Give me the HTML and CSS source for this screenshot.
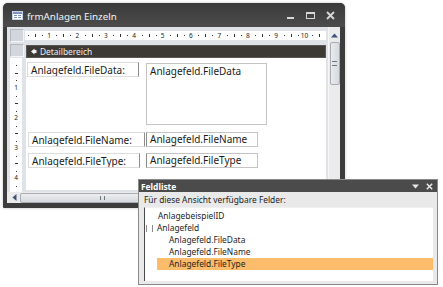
FILE: index.html
```html
<!DOCTYPE html>
<html>
<head>
<meta charset="utf-8">
<link rel="stylesheet" href="styles.css">
</head>
<body>
<div class="window">
  <div class="titlebar">
    <svg class="appicon" width="11" height="9" viewBox="0 0 11 9">
      <rect x="0.5" y="0.5" width="10" height="8" fill="#fff" stroke="#c9d3e6"/>
      <rect x="1" y="1" width="9" height="2" fill="#7e93c4"/>
      <rect x="2" y="4" width="3" height="1" fill="#7e93c4"/>
      <rect x="6" y="4" width="3" height="1" fill="#7e93c4"/>
      <rect x="2" y="6" width="3" height="1" fill="#7e93c4"/>
      <rect x="6" y="6" width="3" height="1" fill="#7e93c4"/>
    </svg>
    <span class="title">frmAnlagen Einzeln</span>
    <div class="controls">
      <svg width="9" height="9" viewBox="0 0 9 9"><rect x="1" y="6" width="7" height="2" fill="#d8d8d8"/></svg>
      <svg width="9" height="9" viewBox="0 0 9 9"><rect x="0.5" y="1.5" width="8" height="6" fill="none" stroke="#d8d8d8"/><rect x="1" y="2" width="7" height="1" fill="#d8d8d8"/></svg>
      <svg width="9" height="9" viewBox="0 0 9 9"><path d="M1 1 L8 8 M8 1 L1 8" stroke="#d8d8d8" stroke-width="1.8"/></svg>
    </div>
  </div>
  <div class="client">
    <div class="corner"><div class="cbox"></div></div>
    <div class="hruler">
      <div class="hstrip">
        <div class="hunit"><i class="d"></i><i class="t"></i><i class="d"></i><span>1</span></div>
        <div class="hunit"><i class="d"></i><i class="t"></i><i class="d"></i><span>2</span></div>
        <div class="hunit"><i class="d"></i><i class="t"></i><i class="d"></i><span>3</span></div>
        <div class="hunit"><i class="d"></i><i class="t"></i><i class="d"></i><span>4</span></div>
        <div class="hunit"><i class="d"></i><i class="t"></i><i class="d"></i><span>5</span></div>
        <div class="hunit"><i class="d"></i><i class="t"></i><i class="d"></i><span>6</span></div>
        <div class="hunit"><i class="d"></i><i class="t"></i><i class="d"></i><span>7</span></div>
        <div class="hunit"><i class="d"></i><i class="t"></i><i class="d"></i><span>8</span></div>
        <div class="hunit"><i class="d"></i><i class="t"></i><i class="d"></i><span>9</span></div>
        <div class="hunit"><i class="d"></i><i class="t"></i><i class="d"></i><span>10</span></div>
        <div class="hunit last"><i class="d"></i><i class="t"></i></div>
      </div>
    </div>
    <div class="vscroll">
      <div class="uparrow"><svg width="7" height="5" viewBox="0 0 7 5"><path d="M0 4.5 L3.5 0.5 L7 4.5 Z" fill="#3d5578"/></svg></div>
      <div class="vthumb"><div class="vgrip"></div></div>
    </div>
    <div class="corner corner2"><div class="cbox"></div></div>
    <div class="section">
      <div class="sbar">
        <svg width="7" height="7" viewBox="0 0 7 7"><path d="M1 3.5 L4.5 0.5 L4.5 2 L6.5 2 L6.5 5 L4.5 5 L4.5 6.5 Z" fill="#f2f2f2"/></svg>
        <span>Detailbereich</span>
      </div>
    </div>
    <div class="vruler">
      <div class="vstrip">
        <div class="vlead"><i class="d"></i><i class="t"></i><i class="d"></i></div>
        <div class="vunit"><span>1</span><i class="d"></i><i class="t"></i><i class="d"></i></div>
        <div class="vunit"><span>2</span><i class="d"></i><i class="t"></i><i class="d"></i></div>
        <div class="vunit"><span>3</span><i class="d"></i><i class="t"></i><i class="d"></i></div>
        <div class="vunit"><span>4</span><i class="d"></i><i class="t"></i><i class="d"></i></div>
      </div>
    </div>
    <div class="form">
      <div class="frow row1">
        <div class="lbl w112">Anlagefeld.FileData:</div>
        <div class="tbx big">Anlagefeld.FileData</div>
      </div>
      <div class="frow row2">
        <div class="lbl w117">Anlagefeld.FileName:</div>
        <div class="tbx small">Anlagefeld.FileName</div>
      </div>
      <div class="frow row3">
        <div class="lbl w112">Anlagefeld.FileType:</div>
        <div class="tbx small">Anlagefeld.FileType</div>
      </div>
    </div>
    <div class="hscroll">
      <div class="larrow"><svg width="5" height="7" viewBox="0 0 5 7"><path d="M4.5 0 L0.5 3.5 L4.5 7 Z" fill="#3d5578"/></svg></div>
      <div class="hthumb"><div class="hgrip"></div></div>
    </div>
    <div class="sizer"></div>
  </div>
</div>

<div class="fieldlist">
  <div class="fl-title">
    <span>Feldliste</span>
    <div class="fl-ctrl">
      <svg width="7" height="5" viewBox="0 0 7 5"><path d="M0 0.5 L7 0.5 L3.5 4.5 Z" fill="#e8e8e8"/></svg>
      <svg width="7" height="7" viewBox="0 0 7 7"><path d="M0.8 0.8 L6.2 6.2 M6.2 0.8 L0.8 6.2" stroke="#e8e8e8" stroke-width="1.5"/></svg>
    </div>
  </div>
  <div class="fl-body">
    <div class="fl-caption">Für diese Ansicht verfügbare Felder:</div>
    <div class="fl-list">
      <div class="item lvl1">AnlagebeispielID</div>
      <div class="item lvl1 parent"><span class="exp"></span>Anlagefeld</div>
      <div class="item lvl2">Anlagefeld.FileData</div>
      <div class="item lvl2">Anlagefeld.FileName</div>
      <div class="item lvl2 sel">Anlagefeld.FileType</div>
    </div>
  </div>
</div>
</body>
</html>
```

FILE: styles.css
```css
html, body {
  margin: 0;
  padding: 0;
  background: #ffffff;
  font-family: "Noto Sans", "Open Sans", sans-serif;
  width: 443px;
  height: 287px;
  overflow: hidden;
  position: relative;
}

.window {
  margin: 3px 0 0 3px;
  width: 342px;
  height: 205px;
  box-sizing: border-box;
  padding: 0 5px 5px 4px;
  background: #3c3c3c;
  border-radius: 5px 5px 1px 1px;
  box-shadow: 0 0 3px rgba(0,0,0,0.25);
  display: flex;
  flex-direction: column;
}

.titlebar {
  height: 24px;
  display: flex;
  align-items: center;
  background: linear-gradient(#3a3a3a, #4c4c4c);
  margin: 0 -5px 0 -4px;
  padding: 0 0 0 9px;
  border-radius: 5px 5px 0 0;
}

.appicon { margin-right: 4px; margin-top: 1px; }

.title {
  color: #f4f4f4;
  font-size: 9.8px;
  margin-top: 2px;
}

.controls {
  margin-left: auto;
  display: flex;
  gap: 11px;
  padding-right: 10px;
  margin-top: 1px;
}

.client {
  flex: 1;
  background: #dfe2e7;
  display: grid;
  grid-template-columns: 17px 304px 12px;
  grid-template-rows: 16px 15px 134px 11px;
}

.corner {
  padding: 2px 0 0 3px;
}
.corner2 { padding-top: 1px; }
.cbox {
  width: 12px;
  height: 11px;
  background: #d3d6dc;
  border: 1px solid #b3b8c0;
  border-right-color: #f4f5f7;
  border-bottom-color: #f4f5f7;
  box-sizing: content-box;
}

/* rulers */
.d, .t { display: block; background: #333; flex: none; }
.d { width: 1px; height: 1px; }

.hruler {
  padding: 4px 0 0 1px;
}
.hstrip {
  height: 9px;
  background: #ffffff;
  display: flex;
  overflow: hidden;
  width: 301px;
}
.hunit {
  flex: 0 0 28.4px;
  display: flex;
  align-items: center;
  font-size: 6.5px;
  line-height: 9px;
  color: #222;
}
.hunit.last { flex: 0 0 14.2px; }
.hunit .d { margin: 0 3px; }
.hunit .t { width: 1px; height: 3px; margin: 0 3px; }
.hunit span { width: 8px; text-align: center; margin: 0 -0.5px 0 -1px; }

.vscroll {
  grid-column: 3;
  grid-row: 1 / 4;
  background: #ebebeb;
  border-left: 1px solid #f6f6f6;
  display: flex;
  flex-direction: column;
  align-items: center;
}
.uparrow {
  height: 13px;
  display: flex;
  align-items: center;
  justify-content: center;
  padding-top: 2px;
}
.vthumb {
  width: 10px;
  height: 43px;
  box-sizing: border-box;
  border: 1px solid #a9adb3;
  border-radius: 2px;
  background: linear-gradient(90deg, #e9ebee, #d6d9de);
  display: flex;
  align-items: center;
  justify-content: center;
}
.vgrip {
  width: 5px;
  height: 3px;
  border-top: 1px solid #6f737a;
  border-bottom: 1px solid #6f737a;
}

.section {
  padding: 2px 2px 0 2px;
}
.sbar {
  height: 13px;
  box-sizing: border-box;
  background: #3d3a35;
  border: 1px solid #5b5853;
  display: flex;
  align-items: center;
  padding-left: 3px;
  gap: 3px;
  color: #ededed;
  font-size: 8.4px;
}

.vruler {
  padding: 0 0 0 3px;
}
.vstrip {
  width: 12px;
  height: 134px;
  background: #ffffff;
  display: flex;
  flex-direction: column;
  overflow: hidden;
  box-sizing: border-box;
}
.vlead, .vunit {
  display: flex;
  flex-direction: column;
  align-items: center;
  font-size: 6.5px;
  color: #222;
}
.vlead { flex: 0 0 26px; }
.vunit { flex: 0 0 30px; }
.vlead .d:first-child { margin-top: 7px; }
.vunit .d:nth-child(2) { margin-top: 3.5px; }
.vlead .t, .vunit .t { width: 3px; height: 1px; margin-top: 6.5px; }
.vlead .t + .d, .vunit .t + .d { margin-top: 6.5px; }
.vunit span { height: 8px; line-height: 8px; }

.form {
  margin: 0 2px 2px 2px;
  background: #ffffff;
  padding: 4px 0 0 1px;
  display: flex;
  flex-direction: column;
}
.frow {
  display: flex;
  align-items: flex-start;
}
.row2 { margin-top: 7px; }
.row3 { margin-top: 6px; }

.lbl, .tbx {
  box-sizing: border-box;
  font-size: 10px;
  color: #1b1b1b;
  padding-left: 3px;
  white-space: nowrap;
  overflow: hidden;
}
.lbl {
  height: 15px;
  line-height: 14px;
  border: 1px solid #dcdcdc;
  border-right-color: #8e8e8e;
}
.w112 { width: 112px; }
.w117 { width: 117px; margin-left: 1px; }
.row1 .tbx { margin-left: 7px; margin-top: 1px; }
.row2 .tbx { margin-left: 1px; }
.row3 .lbl { margin-left: 1px; }
.row3 .tbx { margin-left: 6px; }
.tbx {
  border: 1px solid #c4c4c4;
  line-height: 13px;
}
.big { width: 121px; height: 62px; padding-top: 1px; }
.small { width: 112px; height: 15px; border-left-color: #8e8e8e; }

.hscroll {
  grid-column: 1 / 3;
  grid-row: 4;
  display: flex;
  align-items: center;
  padding-left: 5px;
  background: #ebebeb;
}
.larrow {
  width: 8px;
  display: flex;
  align-items: center;
}
.hthumb {
  width: 165px;
  height: 10px;
  box-sizing: border-box;
  border: 1px solid #a9adb3;
  border-radius: 2px;
  background: linear-gradient(#eceef1, #d5d8dd);
  display: flex;
  align-items: center;
  justify-content: center;
}
.hgrip {
  width: 3px;
  height: 4px;
  border-left: 1px solid #6f737a;
  border-right: 1px solid #6f737a;
}
.sizer { background: #ebebeb; }

/* Floating field list */
.fieldlist {
  position: absolute;
  left: 138px;
  top: 179px;
  width: 300px;
  height: 106px;
  box-sizing: border-box;
  border: 1px solid #8a8a8a;
  background: #e9e9e9;
  display: flex;
  flex-direction: column;
}
.fl-title {
  height: 12px;
  background: #4b4b4b;
  color: #ffffff;
  font-weight: bold;
  font-size: 8.4px;
  display: flex;
  align-items: center;
  padding-left: 2px;
}
.fl-ctrl {
  margin-left: auto;
  display: flex;
  align-items: center;
  gap: 7px;
  padding-right: 4px;
}
.fl-body {
  flex: 1;
  padding: 0 4px 3px 5px;
  display: flex;
  flex-direction: column;
}
.fl-caption {
  font-size: 8.4px;
  color: #222;
  height: 15px;
  line-height: 16px;
}
.fl-list {
  flex: 1;
  background: #ffffff;
  border-left: 1px solid #4a4a4a;
  border-top: 1px solid #f0f0f0;
  padding-top: 2px;
  font-size: 8.4px;
  color: #1e1e1e;
}
.item {
  height: 12px;
  line-height: 12px;
  white-space: nowrap;
  display: flex;
  align-items: center;
}
.lvl1 { padding-left: 13px; }
.lvl2 { padding-left: 24px; }
.parent { padding-left: 1px; }
.exp {
  width: 7px;
  height: 7px;
  box-sizing: border-box;
  border-left: 1px solid #8a8a8a;
  border-right: 1px solid #8a8a8a;
  margin-right: 4px;
}
.sel {
  background: #fbbd6b;
  margin-left: 12px;
  padding-left: 12px;
}
```
